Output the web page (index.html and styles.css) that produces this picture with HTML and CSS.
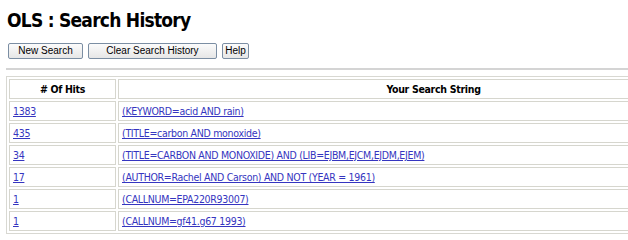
FILE: index.html
```html
<!DOCTYPE html>
<html>
<head>
<meta charset="utf-8">
<title>OLS : Search History</title>
<link rel="stylesheet" href="styles.css">
</head>
<body>
<h1 class="title">OLS : Search History</h1>
<div class="toolbar">
  <button class="btn btn-new">New Search</button>
  <button class="btn btn-clear">Clear Search History</button>
  <button class="btn btn-help">Help</button>
</div>
<hr class="rule">
<div class="table-wrap">
<table class="history">
  <thead>
    <tr><th class="col-hits"># Of Hits</th><th class="col-string">Your Search String</th></tr>
  </thead>
  <tbody>
    <tr><td><a href="#">1383</a></td><td><a href="#">(KEYWORD=acid AND rain)</a></td></tr>
    <tr><td><a href="#">435</a></td><td><a href="#">(TITLE=carbon AND monoxide)</a></td></tr>
    <tr><td><a href="#">34</a></td><td><a href="#">(TITLE=CARBON AND MONOXIDE) AND (LIB=EJBM,EJCM,EJDM,EJEM)</a></td></tr>
    <tr><td><a href="#">17</a></td><td><a href="#">(AUTHOR=Rachel AND Carson) AND NOT (YEAR = 1961)</a></td></tr>
    <tr><td><a href="#">1</a></td><td><a href="#">(CALLNUM=EPA220R93007)</a></td></tr>
    <tr><td><a href="#">1</a></td><td><a href="#">(CALLNUM=gf41.g67 1993)</a></td></tr>
  </tbody>
</table>
</div>
</body>
</html>
```
FILE: styles.css
```css
html, body {
  margin: 0;
  padding: 0;
  background: #ffffff;
  overflow: hidden;
}
body {
  padding: 0 0 0 6px;
  font-family: "DejaVu Sans", Verdana, sans-serif;
  color: #000;
}
.title {
  margin: 0;
  padding: 9px 0 0 1px;
  font-family: "DejaVu Sans", Verdana, sans-serif;
  font-stretch: condensed;
  font-size: 19px;
  line-height: 22px;
  font-weight: bold;
  letter-spacing: -0.75px;
  color: #000;
}
.toolbar {
  display: flex;
  gap: 5px;
  margin: 12px 0 0 2px;
}
.btn {
  height: 16px;
  padding: 0;
  border: 1px solid #7b8ea3;
  border-radius: 2px;
  background: linear-gradient(#fbfbfb, #e6e6e6);
  font-family: "Liberation Sans", Arial, sans-serif;
  font-size: 10px;
  line-height: 14px;
  color: #000;
}
.btn-new { width: 75px; }
.btn-clear { width: 129px; }
.btn-help { width: 27px; }
.rule {
  margin: 9px 0 0 0;
  height: 0;
  border: 0;
  border-top: 2px solid #d4d4d4;
}
.table-wrap {
  overflow: hidden;
  margin-top: 6px;
}
.history {
  width: 746px;
  border-collapse: separate;
  border-spacing: 2px;
  border: 1px solid #d8d8d2;
  font-family: "DejaVu Sans", Verdana, sans-serif;
  font-stretch: condensed;
  font-size: 10.5px;
  letter-spacing: -0.3px;
}
.history th,
.history td {
  border: 1px solid #d6d6ce;
  height: 16px;
  padding: 1px 3px;
  vertical-align: middle;
}
.history th {
  font-weight: bold;
  text-align: center;
}
.col-hits { width: 99px; }
.history td { text-align: left; }
.history a {
  color: #3535c0;
  text-decoration: underline;
}
```
